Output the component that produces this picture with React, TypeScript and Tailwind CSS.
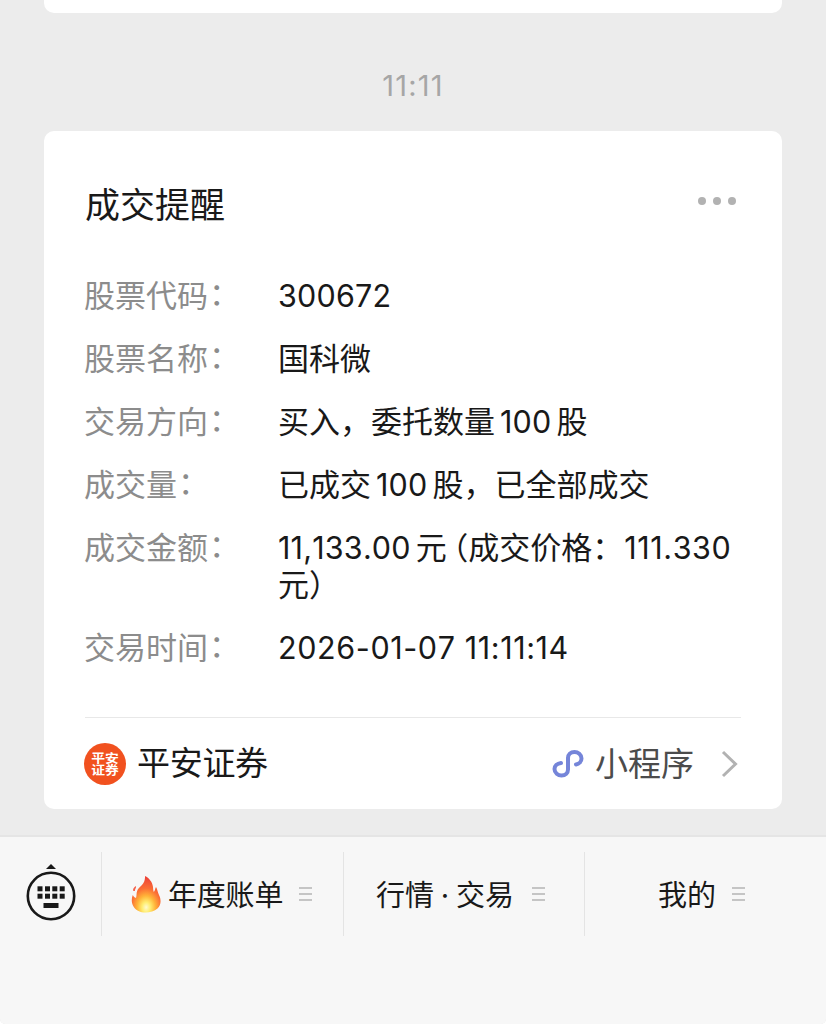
import React from 'react';

const fields = [
  { label: '股票代码', value: '300672' },
  { label: '股票名称', value: '国科微' },
  { label: '交易方向', value: '买入，委托数量100股' },
  { label: '成交量', value: '已成交100股，已全部成交' },
  { label: '成交金额', value: '11,133.00元（成交价格：111.330元）' },
  { label: '交易时间', value: '2026-01-07 11:11:14' },
];

const latinSpacing = (prev: string | undefined, isLast: boolean) => {
  if (!prev) return isLast ? '' : 'mr-[5px]';
  return prev.endsWith('：') ? 'ml-px' : 'mx-[5px]';
};

// Splits a value into latin and CJK runs so digits keep their own size and side spacing
const MixedText = ({ text }: { text: string }) => {
  const runs = text.match(/[\x20-\x7e]+|（|[^\x20-\x7e（]+/g) ?? [];
  return (
    <>
      {runs.map((run, i) => {
        if (run === '（') return <span key={i} className="ml-[6px] [font-feature-settings:'halt']">{run}</span>;
        if (/^[\x20-\x7e]/.test(run)) {
          // times and rows of narrow 1s need looser tracking
          const tracking = /111|:/.test(run) ? 'tracking-[0.6px]' : 'tracking-[0.2px]';
          return (
            <span
              key={i}
              className={`text-[30.5px] leading-none [font-kerning:none] ${tracking} ${latinSpacing(runs[i - 1], i === runs.length - 1)}`}
            >
              {run}
            </span>
          );
        }
        return <span key={i}>{run}</span>;
      })}
    </>
  );
};

const KeyboardIcon = () => (
  <svg width="50" height="58" viewBox="0 0 50 58" fill="#191919">
    <path d="M20 5 25 0 30 5Z" />
    <circle cx="25" cy="32" r="23.2" fill="none" stroke="#191919" strokeWidth="2.6" />
    {[11.5, 19, 26.3, 33.7].map((x) => (
      <React.Fragment key={x}>
        <rect x={x} y="22.3" width="5" height="5" />
        <rect x={x} y="29.7" width="5" height="5" />
      </React.Fragment>
    ))}
    <rect x="17.5" y="39" width="15" height="5" />
  </svg>
);

const FlameIcon = () => (
  <svg width="31" height="38" viewBox="0 0 31 38">
    <defs>
      <radialGradient id="flame" cx="0.5" cy="0.86" r="0.8">
        <stop offset="0" stopColor="#fffbd0" />
        <stop offset="0.18" stopColor="#ffed70" />
        <stop offset="0.4" stopColor="#ffb338" />
        <stop offset="0.65" stopColor="#fb6f35" />
        <stop offset="1" stopColor="#ee4638" />
      </radialGradient>
    </defs>
    <path
      fill="url(#flame)"
      d="M15 1C19 3 22.500 7 23 12C23.200 14 23.200 15.500 23.800 17C25 16 25 13.500 26 12C27.500 14 27.500 17 29 20C31.500 25 31 30 27.500 33.500C24.500 36.300 20 37.500 15.500 37.500C10.500 37.500 6 35.500 3.500 31.500C1.500 28 1.200 24 2.800 20C3.500 21.500 4.500 22.500 6 23C7 20.500 6 18 7.500 15C9.500 11 15.500 9.500 15 1Z"
    />
    <path fill="#f4604a" d="M6 11C6.500 13 5 13.500 4.800 16L3.300 16C2.500 14 4 12 6 11Z" />
  </svg>
);

const MiniProgramIcon = () => (
  <svg width="32" height="30" viewBox="0 0 32 30" fill="none" stroke="#7585d9" strokeWidth="4" strokeLinecap="round">
    <path d="M9 14C5 14.500 2.500 17 2.500 20C2.500 24 6 26.500 9.500 26.500C13.500 26.500 16 24 16 20.500V9C16 5.500 18.500 3 22.500 3C26 3 29.500 5.500 29.500 9.500C29.500 12.500 27 15 24 15.500" />
  </svg>
);

const MenuLines = () => (
  <svg width="13" height="14" viewBox="0 0 13 14" stroke="#b5b5b5" strokeWidth="1.4">
    <path d="M0 1H13M0 7H13M0 13H13" />
  </svg>
);

const BottomBar = () => (
  <nav className="flex h-[189px] items-start rounded-b-[5px] border-t-2 border-[#e5e5e5] bg-[#f7f7f7] pt-[15px] text-[29px] leading-[84px] text-[#191919]">
    <div className="flex h-[84px] w-[102px] shrink-0 items-center justify-center border-r border-[#e4e4e4] pb-[2px]">
      <KeyboardIcon />
    </div>
    <div className="flex h-[84px] w-[242px] shrink-0 items-center border-r border-[#e4e4e4] pl-[28px]">
      <FlameIcon />
      <span className="ml-[7px] mr-[16px] pt-[3px] tracking-[-0.2px]">年度账单</span>
      <MenuLines />
    </div>
    <div className="flex h-[84px] w-[241px] shrink-0 items-center border-r border-[#e4e4e4] pl-[32px]">
      <span className="mr-[18px] flex pt-[3px]">
        行情<span className="w-[22px] text-center">·</span>交易
      </span>
      <MenuLines />
    </div>
    <div className="flex h-[84px] flex-1 items-center pl-[73px]">
      <span className="mr-[16px] pt-[3px]">我的</span>
      <MenuLines />
    </div>
  </nav>
);

export default function App() {
  return (
    <div className="bg-white">
      <div className="flex h-[1024px] w-[826px] flex-col overflow-hidden rounded-b-[5px] bg-[#ececec] font-[Inter,'Noto_Sans_CJK_SC',sans-serif]" lang="zh-CN">
        <div className="mx-[44px] h-[13px] shrink-0 rounded-b-[10px] bg-white" />
        <time className="mt-[52px] h-[40px] text-center text-[29px] leading-[41px] tracking-[1.2px] text-[#a6a6a6] [font-kerning:none]">11:11</time>

        <article className="mx-[44px] mt-[26px] flex h-[678px] w-[738px] shrink-0 flex-col rounded-[10px] bg-white px-[41px]">
          <header className="mt-[48px] flex h-[50px] items-center justify-between">
            <h1 className="pt-px text-[35px] leading-[50px] text-[#191919]">成交提醒</h1>
            <div className="mb-[7px] mr-[5px] flex gap-[7px]">
              <i className="size-[8px] rounded-full bg-[#b2b2b2]" />
              <i className="size-[8px] rounded-full bg-[#b2b2b2]" />
              <i className="size-[8px] rounded-full bg-[#b2b2b2]" />
            </div>
          </header>

          <dl className="-ml-px mt-[48px] flex flex-col gap-[26px] text-[31px] leading-[37px]">
            {fields.map((field) => (
              <div key={field.label} className="flex">
                <dt className="flex w-[194px] shrink-0 text-[#8c8c8c]">
                  {field.label}
                  <span className="-mt-[2px] ml-px">：</span>
                </dt>
                <dd className="w-[470px] text-[#191919]">
                  <MixedText text={field.value} />
                </dd>
              </div>
            ))}
          </dl>

          <footer className="mt-auto flex h-[92px] items-center border-t border-[#e8e8e8]">
            <div className="-ml-px flex size-[42px] flex-col items-center justify-center rounded-full bg-[#f1511f] font-['Noto_Sans_CJK_SC',sans-serif] text-[12px] font-bold leading-[12px] text-white">
              <span className="scale-x-115">平安</span>
              <span className="scale-x-115">证券</span>
            </div>
            <span className="ml-[11px] text-[33px] tracking-[-0.3px] text-[#191919]">平安证券</span>
            <div className="ml-auto flex items-center">
              <MiniProgramIcon />
              <span className="ml-[11px] mr-[27px] pt-[2px] text-[33px] text-[#4c4c4c]">小程序</span>
              <svg className="mr-[3px]" width="17" height="28" viewBox="0 0 17 28" fill="none" stroke="#b2b2b2" strokeWidth="3">
                <path d="M2 2 14.500 14 2 26" />
              </svg>
            </div>
          </footer>
        </article>

        <div className="mt-auto">
          <BottomBar />
        </div>
      </div>
    </div>
  );
}
